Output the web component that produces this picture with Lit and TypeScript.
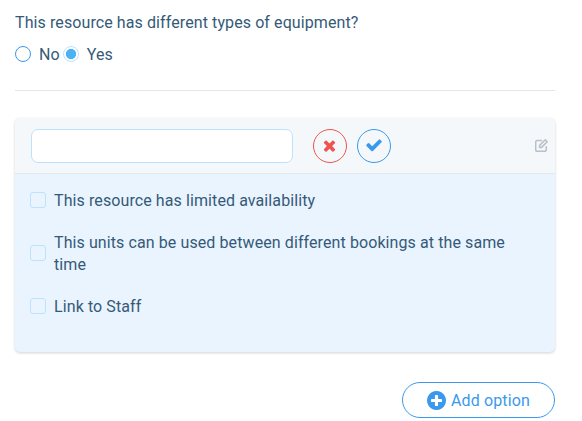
import { LitElement, html, css, svg } from "lit";
import { customElement } from "lit/decorators.js";

const TIMES = "M1490 1322q0 40-28 68l-136 136q-28 28-68 28t-68-28l-294-294-294 294q-28 28-68 28t-68-28l-136-136q-28-28-28-68t28-68l294-294-294-294q-28-28-28-68t28-68l136-136q28-28 68-28t68 28l294 294 294-294q28-28 68-28t68 28l136 136q28 28 28 68t-28 68l-294 294 294 294q28 28 28 68z";
const CHECK = "M1671 566q0 40-28 68l-724 724-136 136q-28 28-68 28t-68-28l-136-136-362-362q-28-28-28-68t28-68l136-136q28-28 68-28t68 28l294 295 656-657q28-28 68-28t68 28l136 136q28 28 28 68z";
const PLUS = "M1344 960v-128q0-26-19-45t-45-19h-256v-256q0-26-19-45t-45-19h-128q-26 0-45 19t-19 45v256h-256q-26 0-45 19t-19 45v128q0 26 19 45t45 19h256v256q0 26 19 45t45 19h128q26 0 45-19t19-45v-256h256q26 0 45-19t19-45zm320-64q0 209-103 385.5t-279.5 279.5-385.5 103-385.5-103-279.5-279.5-103-385.5 103-385.5 279.5-279.5 385.5-103 385.5 103 279.5 279.5 103 385.5z";

@customElement("app-root")
export class AppRoot extends LitElement {
  static styles = css`
    :host { display: block; box-sizing: border-box; height: 421px; padding: 12px 27px 0 15px; background: #fff; color: #355a78; font: 16px/22px Roboto, sans-serif; letter-spacing: .095px; overflow: hidden; }
    * { box-sizing: border-box; }
    svg { display: block; }
    .title { margin: 0; font: inherit; }
    .radios { display: flex; align-items: center; margin-top: 10px; }
    .radio { display: flex; align-items: center; gap: 8px; margin-right: 3px; }
    .dot { width: 16px; height: 16px; margin-bottom: 2px; border: 1px solid #3a99ed; border-radius: 50%; }
    .dot.on { border-color: #bfe3fd; background: radial-gradient(circle, #4ab3f8 4.8px, transparent 5.4px); }
    .rule { height: 1px; margin-top: 24px; background: #e3e4ec; }
    .card { margin-top: 27px; height: 234px; border-radius: 5px; background: #e9f4ff; box-shadow: 0 1px 3px rgba(0, 0, 0, .18); }
    .head { display: flex; align-items: center; height: 56px; padding: 0 7px 0 16px; border-bottom: 1px solid #e4e8ec; border-radius: 5px 5px 0 0; background: #f4f8fb; }
    .field { width: 262px; height: 34px; margin: 0 20px 0 0; border: 1px solid #bde2fd; border-radius: 7px; background: #fff; outline: none; font: inherit; }
    .round { display: grid; place-items: center; width: 34px; height: 34px; margin-right: 10px; padding: 0; border: 1px solid currentColor; border-radius: 50%; background: transparent; }
    .round svg { margin: -1px 0 0 -1px; }
    .no { color: #ee544f; }
    .ok { color: #3a99ed; }
    .edit { margin-left: auto; color: #b7c0c8; }
    .list { display: flex; flex-direction: column; gap: 20px; padding: 16px 40px 0 15px; }
    .item { display: flex; align-items: center; gap: 8px; }
    .box { flex: none; width: 16px; height: 16px; margin-bottom: 2px; border: 1px solid #bde2fd; border-radius: 3px; }
    .foot { display: flex; justify-content: flex-end; margin-top: 30px; }
    .add { display: flex; align-items: center; justify-content: center; gap: 5px; width: 153px; height: 36px; padding: 0; border: 1px solid #3a99ed; border-radius: 18px; background: #fff; color: #3a99ed; font: inherit; letter-spacing: .12px; }
    .add span { padding-top: 1px; }
  `;

  private glyph(d: string, box: string, w: number, h = w) {
    return html`<svg viewBox=${box} width=${w} height=${h} fill="currentColor">${svg`<path d=${d}></path>`}</svg>`;
  }

  render() {
    const options = [
      "This resource has limited availability",
      "This units can be used between different bookings at the same time",
      "Link to Staff",
    ];
    return html`
      <h1 class="title">This resource has different types of equipment?</h1>
      <div class="radios">
        <label class="radio"><span class="dot"></span>No</label>
        <label class="radio"><span class="dot on"></span>Yes</label>
      </div>
      <div class="rule"></div>
      <section class="card">
        <div class="head">
          <input class="field" />
          <button class="round no">${this.glyph(TIMES, "0 0 1792 1792", 17)}</button>
          <button class="round ok">${this.glyph(CHECK, "0 0 1792 1792", 18)}</button>
          <svg class="edit" width="13" height="13" viewBox="0 0 13 13" fill="none" stroke="currentColor" stroke-width="1.5" stroke-linejoin="round" stroke-linecap="round">
            <path d="M6.5 1.6H2.2Q.7 1.6 .7 3.1V10.8Q.7 12.3 2.2 12.3H9.8Q11.3 12.3 11.3 10.8V7.8"></path>
            <path d="M4.6 8.4V6.4L10.3 .8 12.2 2.7 6.6 8.4Z"></path>
          </svg>
        </div>
        <div class="list">
          ${options.map((o) => html`<label class="item"><span class="box"></span><span>${o}</span></label>`)}
        </div>
      </section>
      <div class="foot">
        <button class="add">${this.glyph(PLUS, "128 128 1536 1536", 19)}<span>Add option</span></button>
      </div>
    `;
  }
}
